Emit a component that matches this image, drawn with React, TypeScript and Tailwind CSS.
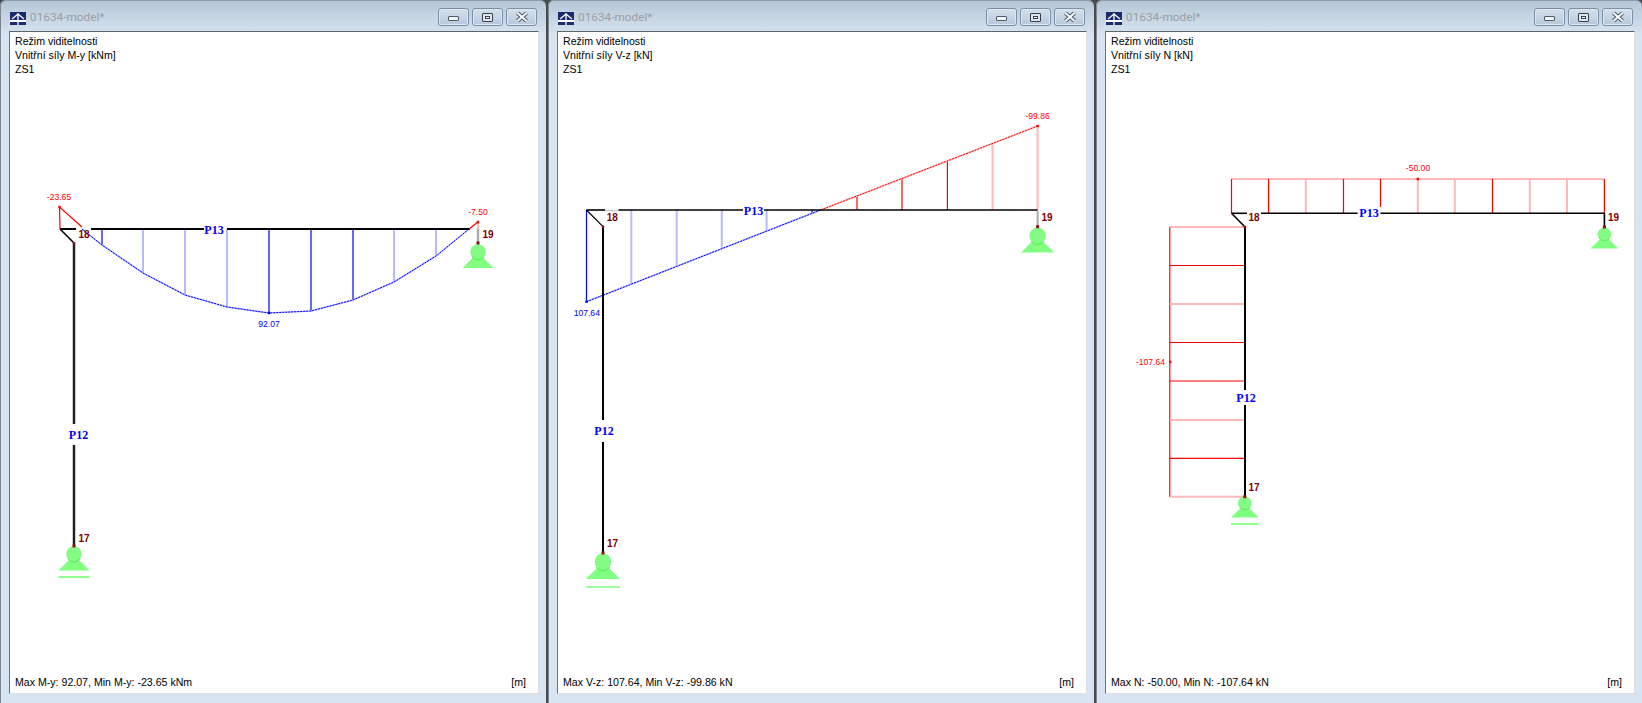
import React from 'react';

const BLUE = '#0000ff';
const LBLUE = '#b9b9ff';
const RED = '#ff0000';
const LRED = '#ffb9b9';

function Logo() {
  return (
    <svg width="16" height="13" viewBox="0 0 16 13" className="shrink-0">
      <rect width="16" height="13" fill="#1c2a6e" />
      <rect y="8" width="16" height="2" fill="#ffffff" />
      <path d="M2 7 L8 2 L14 7 M8 1 V13" stroke="#ffffff" strokeWidth="1.3" fill="none" />
    </svg>
  );
}

function CaptionButton({ kind }: { kind: 'min' | 'max' | 'close' }) {
  return (
    <div className="flex h-[18px] w-[31px] items-center justify-center rounded-[3px] border border-[#7b90a8] bg-gradient-to-b from-[#d5e0ec] to-[#b8c8da] shadow-[inset_0_0_0_1px_#dfe8f1]">
      {kind === 'min' && <div className="mt-[3px] h-[5px] w-[11px] rounded-[1px] border border-[#4e5a68] bg-[#f4f6f8]" />}
      {kind === 'max' && (
        <div className="flex h-[9px] w-[11px] items-center justify-center rounded-[1px] border border-[#36404c] bg-[#dfe6ee]">
          <div className="h-[3px] w-[5px] border border-[#36404c] bg-white" />
        </div>
      )}
      {kind === 'close' && (
        <svg width="12" height="10" viewBox="0 0 12 10">
          <path d="M1.5 1 L10.5 9 M10.5 1 L1.5 9" stroke="#4a5460" strokeWidth="4" />
          <path d="M1.5 1 L10.5 9 M10.5 1 L1.5 9" stroke="#f7f9fb" strokeWidth="2.2" />
        </svg>
      )}
    </div>
  );
}

function ModelWindow({ clientX, lines, status, children }: {
  clientX: number;
  lines: string[];
  status: string;
  children: React.ReactNode;
}) {
  return (
    <div className="flex h-[703px] w-[546px] shrink-0 flex-col rounded-t-[6px] bg-gradient-to-b from-[#b6c6d6] from-0% to-[#d7e4f1] to-[5%] pr-[7px] pl-[9px] pb-[9px] shadow-[inset_0_1px_0_#8b9cad,inset_1px_0_0_#7d8690]">
      <div className="flex h-[31px] shrink-0 items-center pr-[2px] pl-[1px] pt-[5px]">
        <Logo />
        <span className="ml-[4px] font-['Roboto',sans-serif] text-[11.8px] text-[#9b9fa6]">01634-model*</span>
        <div className="ml-auto mb-[2px] flex gap-[3px]">
          <CaptionButton kind="min" />
          <CaptionButton kind="max" />
          <CaptionButton kind="close" />
        </div>
      </div>
      <div className="relative flex flex-1 flex-col justify-between border border-t-[#5f6468] border-r-[#dfdfdf] border-b-[#dfdfdf] border-l-[#6e7276] bg-white px-[5px] pt-[2px] pb-[4px] font-['Liberation_Sans',Arial,sans-serif] text-[10.6px] leading-[14px] text-black">
        <svg className="absolute inset-0 h-[661px] w-[528px]" viewBox={`${clientX + 1} 32 528 661`}>
          {children}
        </svg>
        <div className="relative">
          {lines.map(l => <div key={l}>{l}</div>)}
        </div>
        <div className="relative flex justify-between pr-[7px]">
          <span>{status}</span>
          <span>[m]</span>
        </div>
      </div>
    </div>
  );
}

function Support({ x, y, r, cy, by, hw, lineY }: { x: number; y: number; r: number; cy: number; by: number; hw: number; lineY?: number }) {
  return (
    <g>
      <polygon points={`${x},${by - hw} ${x + hw},${by} ${x - hw},${by}`} fill="#80ff80" />
      <circle cx={x} cy={cy} r={r} fill="#84fb84" />
      <path d={`M${x - r + 1.5} ${cy + r - 3} A${r} ${r} 0 0 0 ${x + r - 1.5} ${cy + r - 3}`} stroke="#58ec58" strokeWidth="1" fill="none" />
      {lineY && <line x1={x - hw} x2={x + hw} y1={lineY} y2={lineY} stroke="#40ff40" strokeWidth="1.2" />}
      <rect x={x - 1.5} y={y - 1.5} width="3" height="3" fill="#8b1010" />
    </g>
  );
}

function Val({ x, y, color, children }: { x: number; y: number; color: string; children: string }) {
  return <text x={x} y={y + 3} textAnchor="middle" fontSize="8.6" fontFamily="'Liberation Sans',sans-serif" fill={color}>{children}</text>;
}

function NodeNo({ x, y, children }: { x: number; y: number; children: string }) {
  return <text x={x} y={y + 3.5} textAnchor="middle" fontSize="10" fontWeight="bold" fontFamily="'Liberation Sans',sans-serif" fill="#800000">{children}</text>;
}

function BarNo({ x, y, children }: { x: number; y: number; children: string }) {
  return <text x={x} y={y + 4} textAnchor="middle" fontSize="12" fontWeight="bold" fontFamily="'Liberation Serif',serif" fill={BLUE}>{children}</text>;
}

function Tick({ x, y1, y2, light, color }: { x: number; y1: number; y2: number; light?: boolean; color: 'b' | 'r' }) {
  const dark = color === 'b' ? BLUE : RED;
  const soft = color === 'b' ? LBLUE : LRED;
  return <line x1={x} x2={x} y1={y1} y2={y2} stroke={light ? soft : dark} strokeWidth={light ? 2 : 1.2} />;
}

function Wire({ points, color }: { points: string; color: 'b' | 'r' }) {
  return (
    <g fill="none">
      <polyline points={points} stroke={color === 'b' ? LBLUE : LRED} strokeWidth="1.6" />
      <polyline points={points} stroke={color === 'b' ? BLUE : RED} strokeWidth="1" strokeDasharray="2 1" />
    </g>
  );
}

function Dot({ x, y, color }: { x: number; y: number; color: string }) {
  return <rect x={x - 1.2} y={y - 1.2} width="2.4" height="2.4" fill={color} />;
}

function MomentDiagram() {
  const ticks = [
    { x: 102, y: 245, light: false }, { x: 143, y: 273, light: true }, { x: 185, y: 295, light: true },
    { x: 227, y: 307, light: true }, { x: 269, y: 313, light: false }, { x: 311, y: 311, light: false },
    { x: 353, y: 300, light: false }, { x: 394, y: 282, light: true }, { x: 436, y: 256, light: true },
  ];
  return (
    <>
      {ticks.map(t => <Tick key={t.x} x={t.x} y1={229} y2={t.y} light={t.light} color="b" />)}
      <Wire color="b" points={`82,229 ${ticks.map(t => `${t.x},${t.y}`).join(' ')} 469,229`} />
      <line x1="60" x2="76" y1="229" y2="229" stroke="#000" strokeWidth="2" />
      <line x1="91" x2="204" y1="229" y2="229" stroke="#000" strokeWidth="2" />
      <line x1="227" x2="470" y1="229" y2="229" stroke="#000" strokeWidth="2" />
      <line x1="60" x2="74" y1="229" y2="243" stroke="#000" strokeWidth="1.6" />
      <line x1="74" x2="74" y1="243" y2="424" stroke="#999" strokeWidth="3" />
      <line x1="74" x2="74" y1="243" y2="424" stroke="#000" strokeWidth="1.6" />
      <line x1="74" x2="74" y1="445" y2="546" stroke="#999" strokeWidth="3" />
      <line x1="74" x2="74" y1="445" y2="546" stroke="#000" strokeWidth="1.6" />
      <line x1="478" x2="478" y1="222" y2="229" stroke={LRED} strokeWidth="2" />
      <line x1="478" x2="478" y1="229" y2="243" stroke="#aaa" strokeWidth="2.4" />
      <polyline points="60,229 59.5,207 82,227" fill="none" stroke={RED} strokeWidth="1.2" />
      <polyline points="469,229 478,222" fill="none" stroke={RED} strokeWidth="1.2" />
      <Dot x={59.5} y={207} color={RED} />
      <Dot x={478} y={222} color={RED} />
      <Dot x={269} y={313} color={BLUE} />
      <rect x="72.8" y="242" width="2.4" height="2.4" fill="#8b1010" />
      <Support x={478} y={243} r={7.7} cy={252} by={268} hw={15.5} />
      <Support x={74} y={546} r={7.7} cy={554} by={570.5} hw={15.5} lineY={577} />
      <Val x={59} y={197} color={RED}>-23.65</Val>
      <Val x={478} y={212} color={RED}>-7.50</Val>
      <Val x={269} y={324} color={BLUE}>92.07</Val>
      <NodeNo x={84} y={234}>18</NodeNo>
      <NodeNo x={488} y={234}>19</NodeNo>
      <NodeNo x={84} y={538}>17</NodeNo>
      <BarNo x={214} y={230}>P13</BarNo>
      <BarNo x={78.5} y={434.5}>P12</BarNo>
    </>
  );
}

function ShearDiagram() {
  const yAt = (x: number) => 210 + (820.6 - x) * (91.7 / 234.1);
  const yRed = (x: number) => 210 - (x - 820.6) * (84 / 217);
  return (
    <>
      <Tick x={586.5} y1={210} y2={301.7} color="b" />
      {[631.3, 676.7, 721.8, 766.6].map(x => <Tick key={x} x={x} y1={210} y2={yAt(x)} light color="b" />)}
      <Tick x={812} y1={210} y2={yAt(812)} color="b" />
      {[857, 902, 947.4].map(x => <Tick key={x} x={x} y1={210} y2={yRed(x)} color="r" />)}
      {[992.5, 1037.6].map(x => <Tick key={x} x={x} y1={210} y2={yRed(x)} light color="r" />)}
      <Wire color="b" points="586.5,301.7 820.6,210" />
      <Wire color="r" points="820.6,210 1037.6,126" />
      <line x1="586.5" x2="605" y1="210" y2="210" stroke="#000" strokeWidth="1.6" />
      <line x1="605" x2="618.5" y1="210.5" y2="210.5" stroke="#c8c8c8" strokeWidth="1.4" />
      <line x1="618.5" x2="743" y1="210" y2="210" stroke="#000" strokeWidth="1.6" />
      <line x1="764" x2="1037.6" y1="210" y2="210" stroke="#000" strokeWidth="1.6" />
      <line x1="586.5" x2="603" y1="210" y2="226.7" stroke="#000" strokeWidth="1.2" />
      <line x1="603" x2="603" y1="227" y2="420" stroke="#000" strokeWidth="2" />
      <line x1="603" x2="603" y1="442" y2="553" stroke="#000" strokeWidth="2" />
      <line x1="1037.6" x2="1037.6" y1="211" y2="227" stroke="#b0b0b0" strokeWidth="2.2" />
      <rect x="601.8" y="225.5" width="2.4" height="2.4" fill="#8b1010" />
      <Dot x={586.5} y={301.7} color={BLUE} />
      <Dot x={1037.6} y={126} color={RED} />
      <Support x={1037.6} y={226.7} r={8.2} cy={235.7} by={252.5} hw={16.5} />
      <Support x={603} y={553} r={8.3} cy={561.7} by={579} hw={17} lineY={587} />
      <Val x={1037.6} y={115.7} color={RED}>-99.86</Val>
      <Val x={586.8} y={312.7} color={BLUE}>107.64</Val>
      <NodeNo x={612.3} y={217.3}>18</NodeNo>
      <NodeNo x={1047} y={217.3}>19</NodeNo>
      <NodeNo x={612.5} y={543}>17</NodeNo>
      <BarNo x={753.5} y={211}>P13</BarNo>
      <BarNo x={604} y={431.4}>P12</BarNo>
    </>
  );
}

function AxialDiagram() {
  const beamTicks = [
    { x: 1231.5, light: false }, { x: 1268.6, light: false }, { x: 1305.8, light: true }, { x: 1343.5, light: false },
    { x: 1380.5, light: false }, { x: 1417.8, light: true }, { x: 1454.8, light: true }, { x: 1492.5, light: false },
    { x: 1529.8, light: true }, { x: 1567, light: true }, { x: 1604.4, light: false },
  ];
  const colTicks = [
    { y: 227, light: true }, { y: 265.5, light: false }, { y: 304, light: true }, { y: 342.5, light: false },
    { y: 381, light: false }, { y: 420, light: true }, { y: 458.3, light: false }, { y: 496.7, light: true },
  ];
  return (
    <>
      <line x1="1231.5" x2="1604.4" y1="179" y2="179" stroke={LRED} strokeWidth="2" />
      {beamTicks.map(t => <Tick key={t.x} x={t.x} y1={179} y2={t.x === 1380.5 ? 207 : 213} light={t.light} color="r" />)}
      <line x1="1169.8" x2="1169.8" y1="227" y2="497" stroke={RED} strokeWidth="1.2" />
      {colTicks.map(t => (
        <line key={t.y} x1="1169.8" x2="1245" y1={t.y} y2={t.y} stroke={t.light ? LRED : RED} strokeWidth={t.light ? 2 : 1.2} />
      ))}
      <line x1="1231.5" x2="1247" y1="213.3" y2="213.3" stroke="#000" strokeWidth="1.6" />
      <line x1="1261" x2="1357.6" y1="213.3" y2="213.3" stroke="#000" strokeWidth="1.6" />
      <line x1="1380.5" x2="1604.4" y1="213.3" y2="213.3" stroke="#000" strokeWidth="1.6" />
      <line x1="1231.5" x2="1245" y1="213.3" y2="227" stroke="#000" strokeWidth="1.6" />
      <line x1="1245" x2="1245" y1="227" y2="390" stroke="#000" strokeWidth="2" />
      <line x1="1245" x2="1245" y1="405" y2="497" stroke="#000" strokeWidth="2" />
      <line x1="1604.4" x2="1604.4" y1="213" y2="227" stroke="#000" strokeWidth="1.6" />
      <rect x="1243.8" y="225.8" width="2.4" height="2.4" fill="#8b1010" />
      <Dot x={1417.8} y={179} color={RED} />
      <Dot x={1170.2} y={362} color={RED} />
      <Support x={1604.4} y={227} r={6.8} cy={234.3} by={248.5} hw={13.8} />
      <Support x={1244.8} y={496.7} r={6.8} cy={503.3} by={517.5} hw={13.8} lineY={524} />
      <Val x={1418} y={168.3} color={RED}>-50.00</Val>
      <Val x={1150.5} y={362} color={RED}>-107.64</Val>
      <NodeNo x={1254} y={217.3}>18</NodeNo>
      <NodeNo x={1613.6} y={217.3}>19</NodeNo>
      <NodeNo x={1254} y={487.3}>17</NodeNo>
      <BarNo x={1369} y={212.7}>P13</BarNo>
      <BarNo x={1246} y={398}>P12</BarNo>
    </>
  );
}

export default function App() {
  return (
    <div className="flex h-[703px] w-[1642px] gap-[2px] overflow-hidden bg-[#4a4a4a]">
      <ModelWindow clientX={9} lines={['Režim viditelnosti', 'Vnitřní síly M-y [kNm]', 'ZS1']} status="Max M-y: 92.07, Min M-y: -23.65 kNm">
        <MomentDiagram />
      </ModelWindow>
      <ModelWindow clientX={557} lines={['Režim viditelnosti', 'Vnitřní síly V-z [kN]', 'ZS1']} status="Max V-z: 107.64, Min V-z: -99.86 kN">
        <ShearDiagram />
      </ModelWindow>
      <ModelWindow clientX={1105} lines={['Režim viditelnosti', 'Vnitřní síly N [kN]', 'ZS1']} status="Max N: -50.00, Min N: -107.64 kN">
        <AxialDiagram />
      </ModelWindow>
    </div>
  );
}
